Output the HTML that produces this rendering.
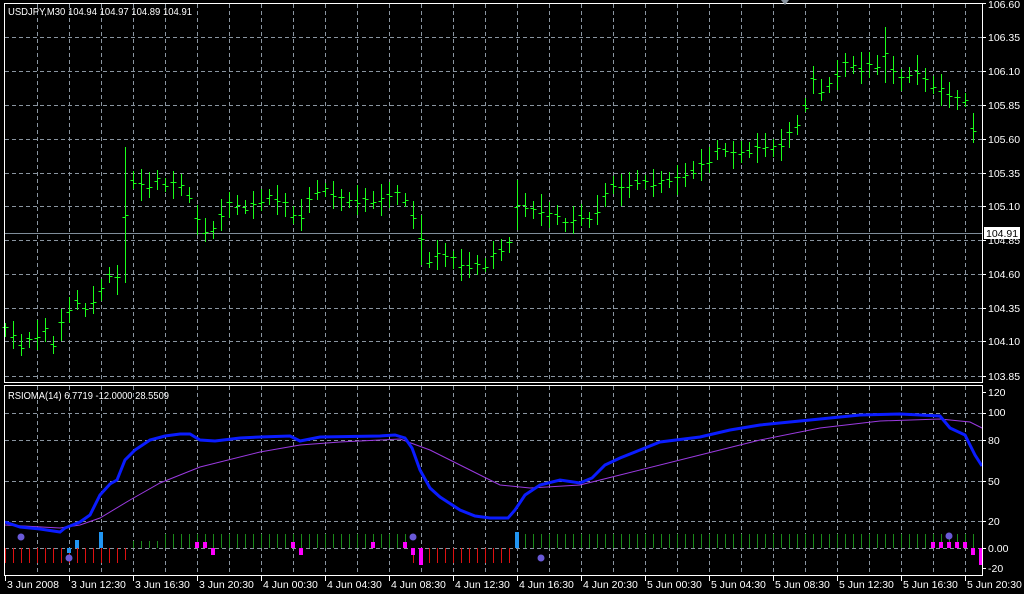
<!DOCTYPE html>
<html><head><meta charset="utf-8"><style>
body{margin:0;background:#000;width:1024px;height:594px;overflow:hidden;font-family:"Liberation Sans",sans-serif}
svg{display:block}
text{font-family:"Liberation Sans",sans-serif;font-size:10.5px;fill:#fff}
</style></head><body>
<svg id="s" width="1024" height="594" viewBox="0 0 1024 594">
<rect width="1024" height="594" fill="#000"/>
<g id="grid" stroke="#8a95a0" stroke-dasharray="4,3" stroke-width="1" shape-rendering="crispEdges"></g>
<line x1="5" y1="233.5" x2="982" y2="233.5" stroke="#7f8d9a"/>
<g id="bars" stroke="#1aff1a" stroke-width="1" shape-rendering="crispEdges"></g>
<g id="hist" shape-rendering="crispEdges"></g>
<polyline fill="none" stroke="#9a3ae0" stroke-width="1" points="5,525 60,528 80,525 100,518 130,500 160,483 200,467 260,452 300,445 340,442 400,439 430,450 470,470 500,485 530,488 580,485 620,475 700,455 760,440 820,428 880,421 940,419 970,422 982,428"/>
<polyline fill="none" stroke="#0a1cff" stroke-width="3" points="5,522 20,527 40,529 60,532 65,528 80,522 90,515 100,495 110,484 117,480 125,460 135,450 150,440 165,436 180,434 190,434 200,440 215,441 240,438 260,437 290,436 300,441 320,437 380,436 395,435 405,438 412,448 420,470 430,488 440,497 460,510 475,516 490,518 508,518 515,510 525,495 540,485 560,480 580,483 592,478 605,465 620,458 640,450 660,442 700,437 730,430 760,425 800,421 830,418 860,415 900,414 940,416 950,428 965,435 975,455 982,466"/>
<g fill="#6a5ad8"><circle cx="21" cy="537" r="3.5"/><circle cx="69" cy="558" r="3.5"/><circle cx="413" cy="537" r="3.5"/><circle cx="541" cy="558" r="3.5"/><circle cx="949" cy="536" r="3.5"/></g>
<g fill="none" stroke="#fff" stroke-width="1" shape-rendering="crispEdges">
<rect x="4.5" y="3.5" width="978" height="379"/>
<rect x="4.5" y="385.5" width="978" height="190"/>
</g>
<polygon points="781,0 789,0 785,5" fill="#8a95a0"/>
<g id="ticks" stroke="#fff" shape-rendering="crispEdges"></g>
<text x="8" y="15" textLength="184" lengthAdjust="spacingAndGlyphs">USDJPY,M30  104.94 104.97 104.89 104.91</text>
<text x="8" y="399" textLength="161" lengthAdjust="spacingAndGlyphs">RSIOMA(14) 6.7719 -12.0000 28.5509</text>
<g>
<text x="988" y="8">106.60</text><text x="988" y="41">106.35</text><text x="988" y="75">106.10</text>
<text x="988" y="109">105.85</text><text x="988" y="143">105.60</text><text x="988" y="177">105.35</text>
<text x="988" y="210">105.10</text><text x="988" y="244">104.85</text><text x="988" y="278">104.60</text>
<text x="988" y="312">104.35</text><text x="988" y="345">104.10</text><text x="988" y="380">103.85</text>
</g>
<rect x="984" y="227" width="36" height="12" fill="#fff"/>
<text x="986" y="237" style="fill:#000">104.91</text>
<g>
<text x="988" y="396">120</text><text x="988" y="416">100</text><text x="988" y="444">80</text>
<text x="988" y="485">50</text><text x="988" y="525">20</text><text x="988" y="552">0.00</text><text x="988" y="572">-20</text>
</g>
<g id="tl"></g>
</svg>
<script>
var NS="http://www.w3.org/2000/svg";
function el(p,t,a){var e=document.createElementNS(NS,t);for(var k in a)e.setAttribute(k,a[k]);p.appendChild(e);return e;}
var g=document.getElementById('grid');
for(var x=37;x<982;x+=32){el(g,'line',{x1:x+.5,y1:4,x2:x+.5,y2:382});el(g,'line',{x1:x+.5,y1:386,x2:x+.5,y2:575});}
[37,71,105,139,173,206,240,274,308,341,376].forEach(function(y){el(g,'line',{x1:5,y1:y+.5,x2:982,y2:y+.5});});
[413,440,481,521,548].forEach(function(y){el(g,'line',{x1:5,y1:y+.5,x2:982,y2:y+.5});});
var m=[330,335,345,340,335,330,345,325,310,300,310,300,290,275,280,215,180,185,185,180,185,185,185,195,220,230,230,215,205,205,207,205,200,197,200,205,215,215,200,190,190,195,200,200,200,200,200,200,195,195,200,215,240,260,255,255,260,265,265,265,265,255,250,245,205,205,210,210,215,215,225,220,215,220,210,195,185,190,185,180,182,183,182,180,180,175,170,165,160,150,150,155,152,150,148,145,148,145,135,125,105,80,90,85,75,65,65,68,65,65,55,70,80,75,70,80,85,90,95,100,100,128];
var b=document.getElementById('bars');
for(var i=0;i<m.length;i++){var x=5+8*i+.5,r=7+((i*7)%10);if(i==15)r=68;if(i==52||i==64)r=25;if(i==110)r=28;if(i==121)r=15;
var o=m[i]+((i*5)%7)-3,c=m[i]+((i*3)%7)-3;
el(b,'line',{x1:x,y1:m[i]-r,x2:x,y2:m[i]+r});el(b,'line',{x1:x-3,y1:o+.5,x2:x,y2:o+.5});el(b,'line',{x1:x,y1:c+.5,x2:x+3,y2:c+.5});}
var h=document.getElementById('hist');
for(var i=0;i<122;i++){var x=5+8*i+.5;
if(i<=15||(i>=51&&i<=63)){ if(i==15)el(h,'line',{x1:x,y1:548,x2:x,y2:560,stroke:'#dd1111'});else el(h,'line',{x1:x,y1:548,x2:x,y2:563,stroke:'#dd1111'});}
else el(h,'line',{x1:x,y1:i<20?541:534,x2:x,y2:548,stroke:'#1a8a1a'});}
function bar(x,y1,y2,c){el(h,'rect',{x:x-2,y:y1,width:4,height:y2-y1,fill:c});}
bar(69,548,553,'#2196f3');bar(77,540,548,'#2196f3');bar(101,532,548,'#2196f3');bar(517,532,548,'#2196f3');
[197,205,293,373,405,933,941,949,957,965].forEach(function(x){bar(x,542,548,'#ff00ff');});
[213,301,413,973].forEach(function(x){bar(x,548,555,'#ff00ff');});
bar(421,548,565,'#ff00ff');bar(981,548,565,'#ff00ff');
var labs=["3 Jun 2008","3 Jun 12:30","3 Jun 16:30","3 Jun 20:30","4 Jun 00:30","4 Jun 04:30","4 Jun 08:30","4 Jun 12:30","4 Jun 16:30","4 Jun 20:30","5 Jun 00:30","5 Jun 04:30","5 Jun 08:30","5 Jun 12:30","5 Jun 16:30","5 Jun 20:30"];
var tk=document.getElementById('ticks'),tl=document.getElementById('tl');
labs.forEach(function(s,k){var x=k==0?5:5+64*k;el(tk,'line',{x1:x+.5,y1:576,x2:x+.5,y2:581});var t=el(tl,'text',{x:x+2,y:588});t.textContent=s;});
for(var y of [3,37,71,105,139,173,206,240,274,308,341,376,392,413,440,481,521,548,568])el(tk,'line',{x1:982,y1:y+.5,x2:986,y2:y+.5});
</script>
</body></html>
